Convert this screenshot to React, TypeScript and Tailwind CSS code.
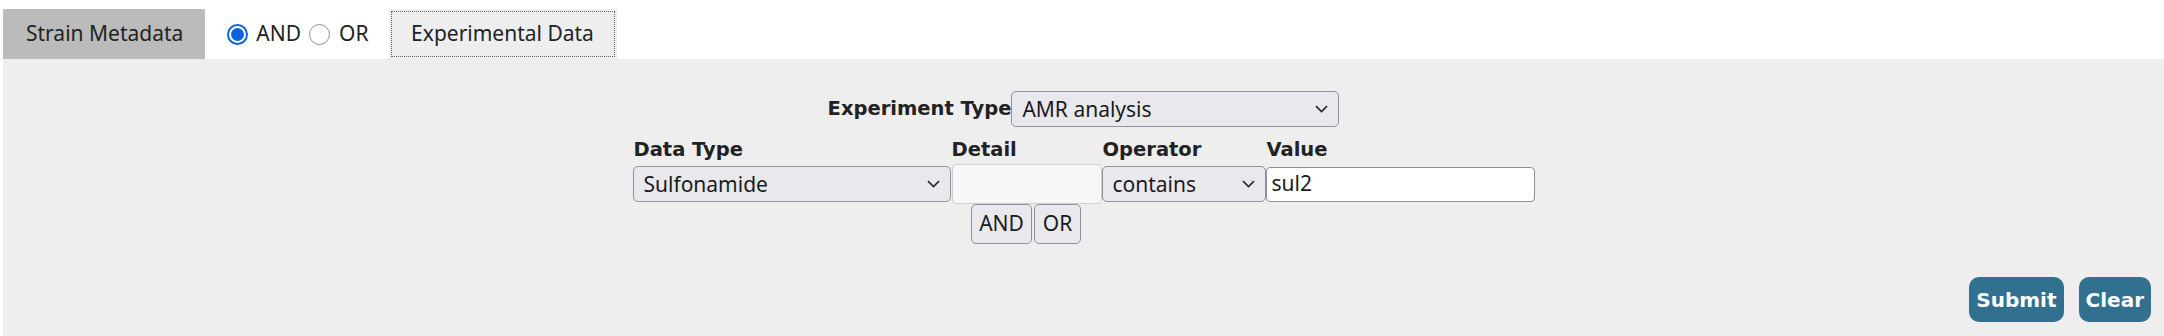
import React from "react";

const ui = { fontFamily: '"Noto Sans", "Open Sans", sans-serif' };
const bold = { fontFamily: '"DejaVu Sans", Verdana, sans-serif' };

function Chevron() {
  return (
    <svg width="13" height="8" viewBox="0 0 13 8" className="shrink-0">
      <path d="M1 1.2 L6.5 6.5 L12 1.2" fill="none" stroke="#2b2b2b" strokeWidth="1.7" />
    </svg>
  );
}

function Select({ value, className }: { value: string; className: string }) {
  return (
    <div
      className={`flex items-center justify-between h-[36px] pl-[10px] pr-[10px] bg-[#e9e9ed] border border-[#8f8f9d] rounded-[5px] text-[21px] text-[#1b1b1b] ${className}`}
      style={ui}
    >
      <span className="leading-none">{value}</span>
      <Chevron />
    </div>
  );
}

function SmallButton({ label, className }: { label: string; className: string }) {
  return (
    <div
      className={`flex items-center justify-center h-[40px] bg-[#e9e9ed] border border-[#8f8f9d] rounded-[5px] text-[21px] text-[#1b1b1b] ${className}`}
      style={ui}
    >
      {label}
    </div>
  );
}

export default function App() {
  return (
    <div className="pt-[9px] pl-[3px] bg-white overflow-hidden">
      <div className="flex h-[50px] text-[21px] text-[#222]" style={ui}>
        <div className="flex items-center bg-[#bbbbbb] pl-[23px] pr-[22px]">Strain Metadata</div>
        <div className="flex items-center pl-[22px] pr-[20px] bg-white">
          <div className="w-[21px] h-[21px] rounded-full border-[2px] border-[#0b63d6] bg-white flex items-center justify-center">
            <div className="w-[13px] h-[13px] rounded-full bg-[#0b63d6]" />
          </div>
          <span className="ml-[8px]">AND</span>
          <div className="ml-[8px] w-[21px] h-[21px] rounded-full border border-[#8f8f9d] bg-white" />
          <span className="ml-[9px]">OR</span>
        </div>
        <div className="flex items-center justify-center w-[228px] bg-[#eeeeee] outline-1 outline-dotted outline-[#666] outline-offset-[-3px]">
          Experimental Data
        </div>
      </div>
      <div className="bg-[#eeeeee] h-[300px] flex flex-col items-center pt-[32px]">
        <div className="flex items-center">
          <span className="text-[19.5px] font-bold text-[#222]" style={bold}>
            Experiment Type
          </span>
          <Select value="AMR analysis" className="w-[328px]" />
        </div>
        <div className="grid grid-cols-[318px_151px_164px_269px] mt-[9px]">
          {["Data Type", "Detail", "Operator", "Value"].map((l) => (
            <div
              key={l}
              className="h-[28px] text-[19.5px] font-bold text-[#222] leading-[28px] pl-[1px]"
              style={bold}
            >
              {l}
            </div>
          ))}
          <div className="h-[40px] flex items-center">
            <Select value="Sulfonamide" className="w-[318px]" />
          </div>
          <div className="h-[40px] pl-[1px]">
            <div className="h-[40px] bg-[#f7f7f7] border border-[#d0d0d4] rounded-[4px]" />
          </div>
          <div className="h-[40px] flex items-center">
            <Select value="contains" className="w-[164px]" />
          </div>
          <div className="h-[40px] flex items-center">
            <div
              className="w-[269px] h-[35px] bg-white border border-[#8f8f9d] rounded-[4px] flex items-center pl-[5px] text-[21px] text-[#1b1b1b]"
              style={ui}
            >
              sul2
            </div>
          </div>
          <div />
          <div className="flex justify-center gap-[2px]">
            <SmallButton label="AND" className="w-[61px]" />
            <SmallButton label="OR" className="w-[47px]" />
          </div>
          <div />
          <div />
        </div>
        <div className="self-stretch flex justify-end gap-[15px] pr-[13px] mt-[33px]">
          <div
            className="h-[45px] px-[7px] flex items-center justify-center rounded-[10px] bg-[#31708f] text-white text-[20px] font-bold"
            style={bold}
          >
            Submit
          </div>
          <div
            className="h-[45px] px-[7px] flex items-center justify-center rounded-[10px] bg-[#31708f] text-white text-[20px] font-bold"
            style={bold}
          >
            Clear
          </div>
        </div>
      </div>
    </div>
  );
}
